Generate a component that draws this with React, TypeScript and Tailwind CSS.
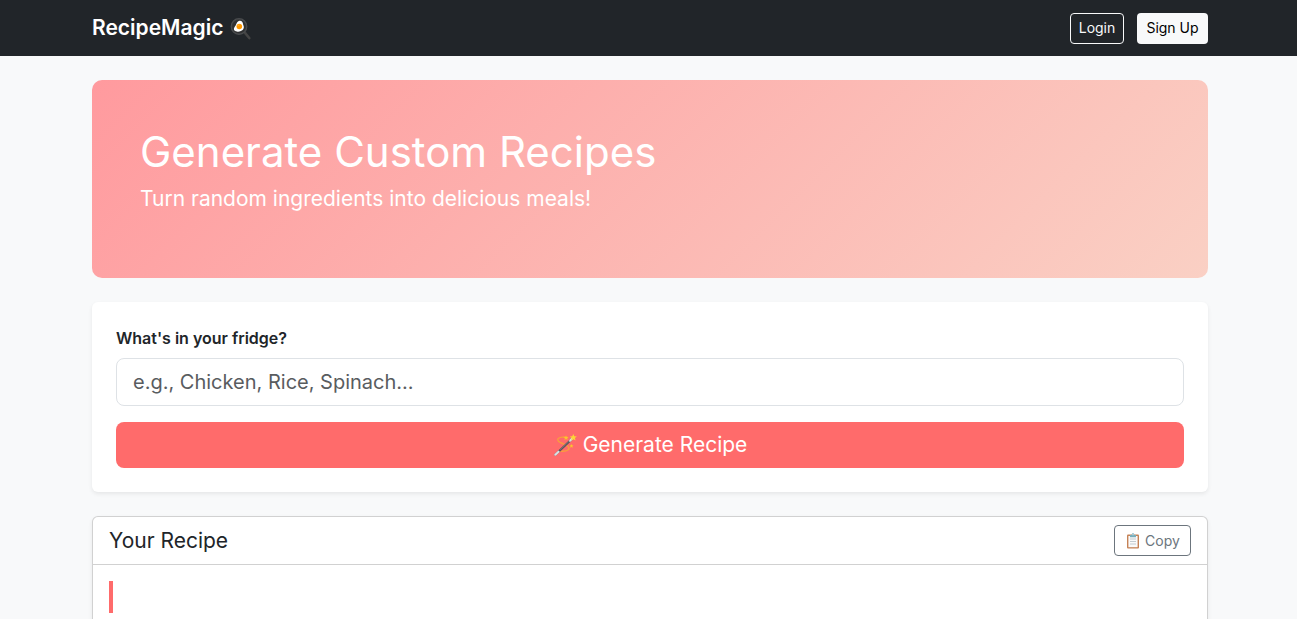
import { useState } from 'react';

function PanIcon() {
  return (
    <svg width="24" height="24" viewBox="0 0 24 24" aria-hidden="true">
      <path d="M14.200 16.800l2-1.800 5.200 6.600c.8 1-.9 2.500-1.900 1.500z" fill="#444" />
      <circle cx="10" cy="10.500" r="7.800" fill="#3a3b3c" stroke="#4a4c4e" strokeWidth="1.200" />
      <circle cx="10" cy="10.500" r="6.600" fill="#303132" />
      <path d="M9.700 5c1.800-1 4 .2 4.200 2.500.1 1.500 1.200 2.300.9 4.200-.3 1.800-1.700 2.800-2.900 3.300-1.600.7-2.500 1-4.100.6-1.400-.4-2.800-1-2.900-2.400-.1-1.500.8-2.300 1.600-3.500C7.500 8 7.500 6.200 9.700 5z" fill="#fff" />
      <circle cx="10.300" cy="10.500" r="2.800" fill="#ff9800" />
      <path d="M8.900 10c.1-.8.8-1.300 1.500-1.200" stroke="#ffc84a" strokeWidth=".7" fill="none" />
    </svg>
  );
}

function WandIcon() {
  return (
    <svg width="24" height="24" viewBox="0 0 24 24" aria-hidden="true">
      <path d="M14.500 4.500C9 3.200 4.200 4.600 4.800 7.200c.5 2 4.800 3.200 8.200 4.800 3 1.500 4.200 3.400 1.800 5-1.800 1.200-5 1.500-7.500 1.100" fill="none" stroke="#f9a03a" strokeWidth="1.300" strokeLinecap="round" strokeDasharray="4 1" />
      <path d="M2.300 21.700L20.200 4.800" stroke="#5d555a" strokeWidth="2.200" strokeLinecap="round" />
      <path d="M2.300 21.700l3.200-3M17 7.800l3-2.900" stroke="#dbe0e3" strokeWidth="2.200" strokeLinecap="round" />
      <path d="M7 16.800L16.500 7.800" stroke="#827a80" strokeWidth=".7" />
      <path d="M20.300 1l1 2.300 2.500.1-1.900 1.700.7 2.500-2.300-1.300-2.200 1.300.6-2.500-1.900-1.700 2.500-.2z" fill="#fdd835" />
      <path d="M13 2.500l.7 1.500 1.700.1-1.300 1.100.5 1.700-1.600-.9-1.500.9.4-1.700-1.300-1.100 1.700-.1zM18.500 11l.6 1.300 1.400.1-1.100.9.4 1.500-1.300-.8-1.300.8.3-1.500-1-.9 1.400-.1z" fill="#fbc52d" />
    </svg>
  );
}

function ClipboardIcon() {
  return (
    <svg width="16" height="16" viewBox="0 0 16 16" aria-hidden="true">
      <rect x="2" y="1.500" width="12" height="14" rx="1" fill="#c58256" />
      <path d="M3.400 3h9.200v11.200H3.400z" fill="#fafafa" />
      <path d="M5 6h6M5 8.500h6M5 11h6" stroke="#bcc5cb" strokeWidth=".9" />
      <path d="M5 2h1.700C6.800.9 7.200.3 8 .3S9.200.9 9.300 2H11v2.200H5z" fill="#78aebc" />
      <circle cx="8" cy="1.700" r=".6" fill="#e8f4f7" />
    </svg>
  );
}

export default function App() {
  const [ingredients, setIngredients] = useState('');

  return (
    <div className="min-h-screen overflow-hidden bg-[#f8f9fa] font-['Inter','Open_Sans',sans-serif] text-base text-[#212529]">
      <nav className="bg-[#212529]">
        <div className="mx-auto flex h-14 max-w-[1143px] items-center justify-between pr-3 pl-[15px]">
          <a href="#" className="flex items-center gap-1.5 text-[21px] font-semibold text-white">
            RecipeMagic
            <PanIcon />
          </a>
          <div className="flex gap-[13px]">
            <button type="button" className="h-[31px] w-[54px] rounded border border-[#f8f9fa] text-sm text-[#f8f9fa]">
              Login
            </button>
            <button type="button" className="h-[31px] w-[71px] rounded bg-[#f8f9fa] text-sm text-black">
              Sign Up
            </button>
          </div>
        </div>
      </nav>

      <main className="mx-auto flex max-w-[1143px] flex-col gap-6 pt-6 pr-3 pl-[15px]">
        <header className="rounded-[10px] bg-[linear-gradient(135deg,#ff9a9e_0%,#fad0c4_100%)] px-12 pt-12 pb-16 text-white">
          <h1 className="mb-2 text-[42px] leading-12 font-normal">Generate Custom Recipes</h1>
          <p className="text-[21px] leading-[30px]">Turn random ingredients into delicious meals!</p>
        </header>

        <form
          className="flex flex-col rounded-md bg-white p-6 shadow-[0_2px_4px_rgba(0,0,0,0.075)]"
          onSubmit={(event) => event.preventDefault()}
        >
          <label htmlFor="ingredients" className="mb-2 leading-6 font-semibold">
            What's in your fridge?
          </label>
          <input
            id="ingredients"
            type="text"
            value={ingredients}
            onChange={(event) => setIngredients(event.target.value)}
            placeholder="e.g., Chicken, Rice, Spinach..."
            className="mb-4 h-12 w-full rounded-lg border border-[#dee2e6] bg-white px-4 text-xl placeholder:text-[#595c5f]"
          />
          <button
            type="submit"
            className="flex h-[46px] w-full items-center justify-center gap-1.5 rounded-lg bg-[#ff6b6b] text-[21px] text-white"
          >
            <WandIcon />
            Generate Recipe
          </button>
        </form>

        <section className="rounded-md border border-black/18 bg-white shadow-[0_2px_4px_rgba(0,0,0,0.075)]">
          <div className="flex items-center justify-between border-b border-black/18 px-4 py-2">
            <h2 className="text-[21px] leading-6">Your Recipe</h2>
            <button
              type="button"
              className="flex h-[31px] w-[77px] items-center justify-center gap-1 rounded border border-[#6c757d] text-sm text-[#6c757d]"
            >
              <ClipboardIcon />
              Copy
            </button>
          </div>
          <div className="p-4">
            <div className="h-8 border-l-4 border-[#ff6b6b]" />
          </div>
        </section>
      </main>
    </div>
  );
}
